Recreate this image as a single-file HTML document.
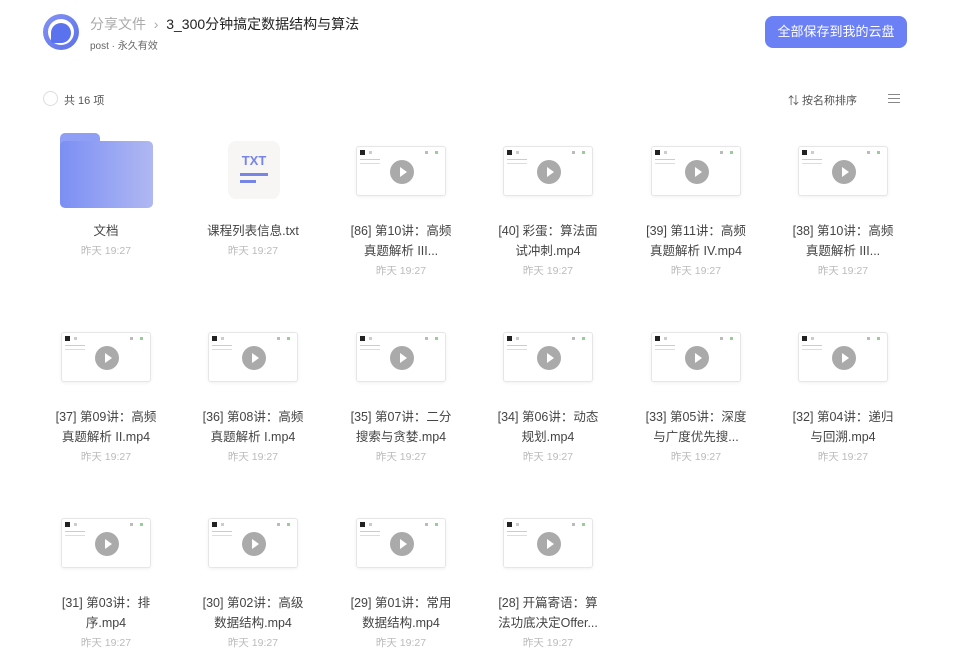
<!DOCTYPE html>
<html><head><meta charset="utf-8"><style>
*{margin:0;padding:0;box-sizing:border-box}
body{width:960px;height:652px;background:#fff;font-family:"Liberation Sans","Noto Sans CJK SC",sans-serif;position:relative;overflow:hidden;color:#333}
.logo{position:absolute;left:43px;top:14px;width:36px;height:36px;border-radius:50%;background:linear-gradient(135deg,#8494f5,#5b6fe8)}
.logo:after{content:"";position:absolute;left:5px;top:5px;width:26px;height:26px;border-radius:50%;background:#fff}
.logo i{position:absolute;left:8px;top:9px;width:20px;height:20px;border-radius:50% 50% 50% 10%;background:#5b72ee;z-index:2}
.bc{position:absolute;left:90px;top:14px;font-size:14px;color:#222}
.bc span{color:#aaa}
.sub{position:absolute;left:90px;top:37px;font-size:10px;color:#666}
.btn{position:absolute;left:765px;top:16px;width:142px;height:32px;border-radius:8px;background:#6b80f5;color:#fff;font-size:13px;text-align:center;line-height:32px}
.chk{position:absolute;left:43px;top:91px;width:15px;height:15px;border:1px solid #ddd;border-radius:50%}
.cnt{position:absolute;left:64px;top:92px;font-size:11px;color:#555}
.sort{position:absolute;left:788px;top:92px;font-size:11px;color:#555}
.menu{position:absolute;left:888px;top:94px;width:12px;height:9px;border-top:1px solid #888;border-bottom:1px solid #888}
.menu:after{content:"";position:absolute;left:0;top:3px;width:12px;border-top:1px solid #888}
.cell{position:absolute;width:140px;text-align:center}
.t{font-size:12.5px;line-height:20px;color:#444}
.d{font-size:10.5px;line-height:20px;color:#bbb}
.th{position:absolute;width:90px;height:50px;border:1px solid #e6e6e6;border-radius:3px;background:#fff;box-shadow:0 1px 3px rgba(0,0,0,.06)}
.th:before{content:"";position:absolute;left:3px;top:3px;width:5px;height:5px;background:#222;box-shadow:8px 0 0 -1px #ccc,64px 0 0 -1px #bbb,74px 0 0 -1px #9c9}
.th:after{content:"";position:absolute;left:3px;top:12px;width:20px;height:1px;background:#ccc;box-shadow:0 4px 0 #ddd}
.th b{position:absolute;left:33px;top:13px;width:24px;height:24px;border-radius:50%;background:#aaa}
.th b:after{content:"";position:absolute;left:10px;top:7px;border-left:7px solid #fff;border-top:5px solid transparent;border-bottom:5px solid transparent}
</style></head><body>
<div class="logo"><i></i></div>
<div class="bc"><span>分享文件 &nbsp;›&nbsp; </span>3_300分钟搞定数据结构与算法</div>
<div class="sub">post · 永久有效</div>
<div class="btn">全部保存到我的云盘</div>
<div class="chk"></div><div class="cnt">共 16 项</div>
<div class="sort">⇅ 按名称排序</div><div class="menu"></div>

<div style="position:absolute;left:60px;top:133px;width:93px;height:75px;">
<div style="position:absolute;left:0;top:0;width:40px;height:14px;background:#8e9ff5;border-radius:5px 5px 0 0"></div>
<div style="position:absolute;left:0;top:8px;width:93px;height:67px;background:linear-gradient(90deg,#7b8ff4,#b0b8f2);border-radius:5px"></div></div>
<div style="position:absolute;left:228px;top:141px;width:52px;height:58px;background:#f7f6f4;border-radius:8px;text-align:center">
<div style="font-size:13px;font-weight:bold;color:#7785e6;margin-top:12px">TXT</div>
<div style="width:28px;height:3px;background:#7785e6;margin:5px 0 0 12px"></div>
<div style="width:16px;height:3px;background:#7785e6;margin:4px 0 0 12px"></div></div>

<div class="th" style="left:356px;top:146px"><b></b></div>
<div class="th" style="left:503px;top:146px"><b></b></div>
<div class="th" style="left:651px;top:146px"><b></b></div>
<div class="th" style="left:798px;top:146px"><b></b></div>
<div class="th" style="left:61px;top:332px"><b></b></div>
<div class="th" style="left:208px;top:332px"><b></b></div>
<div class="th" style="left:356px;top:332px"><b></b></div>
<div class="th" style="left:503px;top:332px"><b></b></div>
<div class="th" style="left:651px;top:332px"><b></b></div>
<div class="th" style="left:798px;top:332px"><b></b></div>
<div class="th" style="left:61px;top:518px"><b></b></div>
<div class="th" style="left:208px;top:518px"><b></b></div>
<div class="th" style="left:356px;top:518px"><b></b></div>
<div class="th" style="left:503px;top:518px"><b></b></div>

<div class="cell" style="left:36px;top:221px"><div class="t">文档</div><div class="d">昨天 19:27</div></div>
<div class="cell" style="left:183px;top:221px"><div class="t">课程列表信息.txt</div><div class="d">昨天 19:27</div></div>
<div class="cell" style="left:331px;top:221px"><div class="t">[86] 第10讲：高频<br>真题解析 III...</div><div class="d">昨天 19:27</div></div>
<div class="cell" style="left:478px;top:221px"><div class="t">[40] 彩蛋：算法面<br>试冲刺.mp4</div><div class="d">昨天 19:27</div></div>
<div class="cell" style="left:626px;top:221px"><div class="t">[39] 第11讲：高频<br>真题解析 IV.mp4</div><div class="d">昨天 19:27</div></div>
<div class="cell" style="left:773px;top:221px"><div class="t">[38] 第10讲：高频<br>真题解析 III...</div><div class="d">昨天 19:27</div></div>

<div class="cell" style="left:36px;top:407px"><div class="t">[37] 第09讲：高频<br>真题解析 II.mp4</div><div class="d">昨天 19:27</div></div>
<div class="cell" style="left:183px;top:407px"><div class="t">[36] 第08讲：高频<br>真题解析 I.mp4</div><div class="d">昨天 19:27</div></div>
<div class="cell" style="left:331px;top:407px"><div class="t">[35] 第07讲：二分<br>搜索与贪婪.mp4</div><div class="d">昨天 19:27</div></div>
<div class="cell" style="left:478px;top:407px"><div class="t">[34] 第06讲：动态<br>规划.mp4</div><div class="d">昨天 19:27</div></div>
<div class="cell" style="left:626px;top:407px"><div class="t">[33] 第05讲：深度<br>与广度优先搜...</div><div class="d">昨天 19:27</div></div>
<div class="cell" style="left:773px;top:407px"><div class="t">[32] 第04讲：递归<br>与回溯.mp4</div><div class="d">昨天 19:27</div></div>

<div class="cell" style="left:36px;top:593px"><div class="t">[31] 第03讲：排<br>序.mp4</div><div class="d">昨天 19:27</div></div>
<div class="cell" style="left:183px;top:593px"><div class="t">[30] 第02讲：高级<br>数据结构.mp4</div><div class="d">昨天 19:27</div></div>
<div class="cell" style="left:331px;top:593px"><div class="t">[29] 第01讲：常用<br>数据结构.mp4</div><div class="d">昨天 19:27</div></div>
<div class="cell" style="left:478px;top:593px"><div class="t">[28] 开篇寄语：算<br>法功底决定Offer...</div><div class="d">昨天 19:27</div></div>
</body></html>
